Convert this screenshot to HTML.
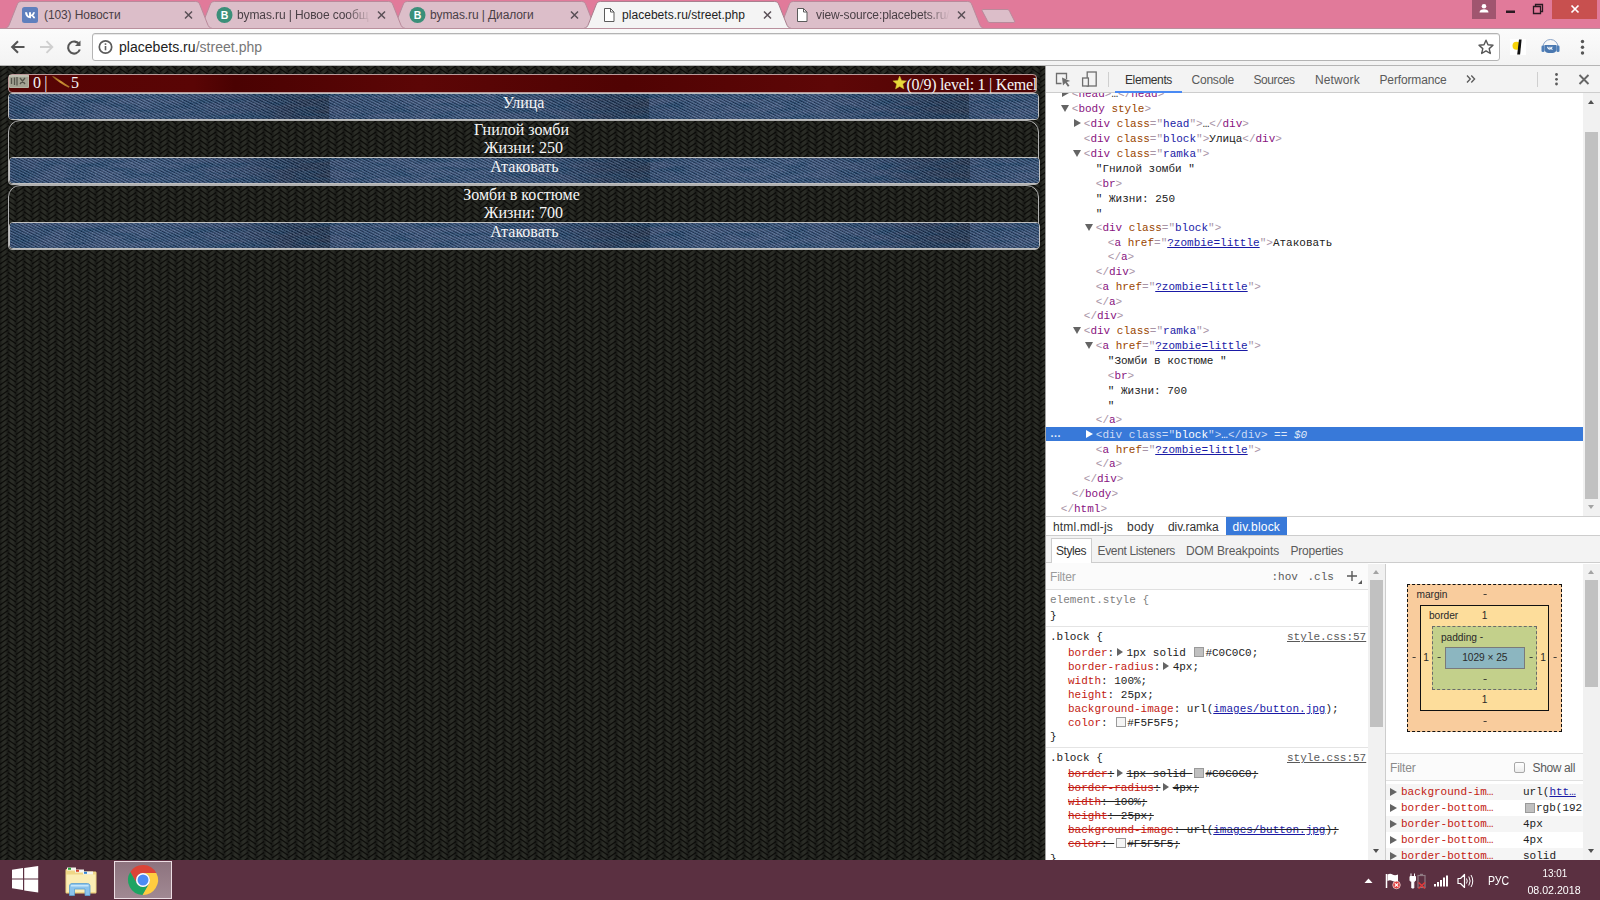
<!DOCTYPE html>
<html>
<head>
<meta charset="utf-8">
<title>placebets.ru/street.php</title>
<style>
*{box-sizing:border-box;margin:0;padding:0}
html,body{width:1600px;height:900px;overflow:hidden;background:#E17A9A;font-family:"Liberation Sans",sans-serif}
.abs{position:absolute}
#frame{position:absolute;left:0;top:0;width:1600px;height:900px;background:#E17A9A;overflow:hidden}
/* ---------- tab strip ---------- */
#tabs{position:absolute;left:0;top:0;width:1600px;height:28px}
#tabs svg{position:absolute;left:0;top:0}
.tabtxt{position:absolute;top:7px;font-size:12px;line-height:16px;color:#4a4046;white-space:nowrap;overflow:hidden;letter-spacing:-0.1px}
.tabtxt.act{color:#222;letter-spacing:0.04px}
.tabx{position:absolute;top:10px;width:9px;height:9px}
/* ---------- toolbar ---------- */
#toolbar{position:absolute;left:0;top:28px;width:1600px;height:38px;background:linear-gradient(#fbfbfb,#f3f3f3);border-top:1px solid #b9909d;border-bottom:1px solid #b5b5b5}
#omni{position:absolute;left:92px;top:4.3px;width:1408px;height:27.4px;background:#fff;border:1px solid #b4b4b4;border-radius:3px;box-shadow:inset 0 1px 0 #e8e8e8}
#url{position:absolute;left:119px;top:10.3px;font-size:14px;line-height:16px;color:#222;white-space:nowrap;letter-spacing:0.03px}
#url span{color:#777}
/* ---------- page ---------- */
#page{position:absolute;left:0;top:66px;width:1045px;height:794px;overflow:hidden;background-color:#1d1e1b}
#page .knit{position:absolute;left:0;top:0;width:100%;height:100%}
.serif{font-family:"Liberation Serif",serif;font-size:16px;line-height:18px;color:#F5F5F5;text-align:center;white-space:nowrap}
.block{position:absolute;left:8px;width:1031px;height:27px;border:1px solid #C0C0C0;border-radius:4px;overflow:hidden}
.denim{position:absolute;left:0;top:0;width:100%;height:100%}
.ramka{position:absolute;left:8px;width:1031px;border:1px solid #b0b0b0;border-radius:12px 12px 4px 4px}
#head{position:absolute;left:8px;top:8px;width:1029px;height:19px;border:1px solid #b99;border-radius:4px;background:linear-gradient(90deg,#560404 0%,#5a0505 18%,#4a0202 22%,#5c0606 40%,#500303 60%,#5e0707 80%,#4c0303 100%)}
/* ---------- devtools ---------- */
#dt{position:absolute;left:1045px;top:66px;width:555px;height:794px;background:#fff;border-left:1px solid #a3a3a3;overflow:hidden;font-size:12px;color:#333}
.mono{font-family:"Liberation Mono",monospace;font-size:11px;line-height:14.7px;white-space:pre}

/* devtools detail */
#dt .tb{position:absolute;left:0;top:0;width:554px;height:27px;background:#f3f3f3;border-bottom:1px solid #cdcdcd}
#dt .tbt{position:absolute;top:6.8px;font-size:12px;line-height:15px;color:#5a5a5a;white-space:nowrap}
#dt .tbt.sel{color:#333}
.row{position:absolute;left:0;height:15px;white-space:pre;font-family:"Liberation Mono",monospace;font-size:11px;line-height:15px;color:#222}
.row i{font-style:normal}
.b{color:#a894a6}.t{color:#881280}.n{color:#994500}.v{color:#1a1aa6}.lk{color:#1a1aa6;text-decoration:underline}
.tri{position:absolute;width:0;height:0}
.tri.d{border-left:4px solid transparent;border-right:4px solid transparent;border-top:7px solid #646464}
.tri.r{border-top:4px solid transparent;border-bottom:4px solid transparent;border-left:7px solid #646464}
.selrow{position:absolute;left:0px;top:361px;width:537px;height:15px;background:#3879d9}
.sel .b,.sel .t,.sel .n{color:#cfdcf5}.sel .v{color:#fff}

.ui{position:absolute;font-size:12px;line-height:15px;color:#5a5a5a;white-space:nowrap}
.st{position:absolute;font-family:"Liberation Mono",monospace;font-size:11px;line-height:14px;white-space:pre;color:#222}
.st i{font-style:normal}
.p{color:#c21a12}.g{color:#808080}
.sw{display:inline-block;width:10px;height:10px;border:1px solid #9a9a9a;vertical-align:-1.5px;margin:0 1px 0 2px}
.so{text-decoration:line-through}
.mt{display:inline-block;width:0;height:0;border-top:4px solid transparent;border-bottom:4px solid transparent;border-left:6.5px solid #646464;vertical-align:-0.5px;margin:0 3.5px 0 2.7px}
.bm{position:absolute;font-size:10.2px;line-height:12px;color:#2a2a2a;white-space:nowrap;letter-spacing:-0.05px;margin-top:-0.5px}
.sbar{position:absolute;background:#f1f1f1}
.sthumb{position:absolute;background:#c1c1c1}
.arr{position:absolute;width:0;height:0;border-left:3.7px solid transparent;border-right:3.7px solid transparent;margin-left:.3px}
.arr.u{border-bottom:4.5px solid #505050}.arr.dn{border-top:4.5px solid #505050}
/* ---------- taskbar ---------- */
#task{position:absolute;left:0;top:860px;width:1600px;height:40px;background:#5B3041}
</style>
</head>
<body>
<div id="frame">

<!-- TABSTRIP -->
<div id="tabs">
<svg width="1600" height="29" viewBox="0 0 1600 29">
<path d="M776.5 28.5 C779.5 28 780.5 26.5 781.5 24 L789 5 C790 2.5 791 1.5 793.5 1.5 L967.5 1.5 C970 1.5 971 2.5 972 5 L979.5 24 C980.5 26.5 981.5 28 984.5 28.5 Z" fill="#DCBEC9" stroke="#b98a9b" stroke-width="1"/>
<path d="M390.5 28.5 C393.5 28 394.5 26.5 395.5 24 L403 5 C404 2.5 405 1.5 407.5 1.5 L581.5 1.5 C584 1.5 585 2.5 586 5 L593.5 24 C594.5 26.5 595.5 28 598.5 28.5 Z" fill="#DCBEC9" stroke="#b98a9b" stroke-width="1"/>
<path d="M197.5 28.5 C200.5 28 201.5 26.5 202.5 24 L210 5 C211 2.5 212 1.5 214.5 1.5 L388.5 1.5 C391 1.5 392 2.5 393 5 L400.5 24 C401.5 26.5 402.5 28 405.5 28.5 Z" fill="#DCBEC9" stroke="#b98a9b" stroke-width="1"/>
<path d="M4.5 28.5 C7.5 28 8.5 26.5 9.5 24 L17 5 C18 2.5 19 1.5 21.5 1.5 L195.5 1.5 C198 1.5 199 2.5 200 5 L207.5 24 C208.5 26.5 209.5 28 212.5 28.5 Z" fill="#DCBEC9" stroke="#b98a9b" stroke-width="1"/>
<path d="M983 9.5 L1007 9.5 C1008.5 9.5 1009 10 1009.7 11.5 L1014.5 21 C1015 22 1014.6 22.5 1013 22.5 L990 22.5 C988.5 22.5 988 22 987.3 20.5 L982.3 11 C981.8 10 982 9.5 983 9.5Z" fill="#DCBEC9" stroke="#b98a9b" stroke-width="1"/>
<rect x="0" y="28" width="1600" height="1" fill="#94687b"/>
<path d="M583.5 28.5 C586.5 28 587.5 26.5 588.5 24 L596 5 C597 2.5 598 1.5 600.5 1.5 L774.5 1.5 C777 1.5 778 2.5 779 5 L786.5 24 C787.5 26.5 788.5 28 791.5 28.5 Z" fill="#F4F4F4" stroke="#a9808f" stroke-width="1"/>
<rect x="586.5" y="28" width="203" height="1" fill="#F4F4F4"/>
<rect x="22" y="7" width="16" height="16" rx="2.5" fill="#5F7FBD"/>
<path transform="translate(30 15.2) scale(1.22 1.3) translate(-29.3 -14.5)" d="M25.2 12.2h1.7c.3 1.6 1 2.8 1.6 3v-3h1.6v1.9c.7-.1 1.4-.9 1.7-1.9h1.6c-.3 1.2-1 2-1.6 2.4.6.3 1.4 1 1.8 2.2h-1.7c-.3-.9-1-1.5-1.8-1.6v1.6h-.4c-2.600 0-4.200-1.800-4.500-4.600z" fill="#fff"/>
<circle cx="224.5" cy="15" r="8" fill="#3B8F79"/>
<text x="224.5" y="18.8" font-family="Liberation Sans" font-weight="bold" font-size="10.5" fill="#fff" text-anchor="middle">B</text>
<circle cx="417.5" cy="15" r="8" fill="#3B8F79"/>
<text x="417.5" y="18.8" font-family="Liberation Sans" font-weight="bold" font-size="10.5" fill="#fff" text-anchor="middle">B</text>
<path d="M604.5 8.500h6l3.500 3.500v9.500h-9.500z" fill="#fff" stroke="#5b5b5b" stroke-width="1"/>
<path d="M610.5 8.500v3.500h3.500" fill="none" stroke="#5b5b5b" stroke-width="1"/>
<path d="M797.5 8.500h6l3.500 3.500v9.500h-9.500z" fill="#fff" stroke="#5b5b5b" stroke-width="1"/>
<path d="M803.5 8.500v3.500h3.500" fill="none" stroke="#5b5b5b" stroke-width="1"/>
<path d="M185.0 11.500l7 7M192.0 11.500l-7 7" stroke="#5a5057" stroke-width="1.5" fill="none"/>
<path d="M378.0 11.500l7 7M385.0 11.500l-7 7" stroke="#5a5057" stroke-width="1.5" fill="none"/>
<path d="M571.0 11.500l7 7M578.0 11.500l-7 7" stroke="#5a5057" stroke-width="1.5" fill="none"/>
<path d="M764.0 11.500l7 7M771.0 11.500l-7 7" stroke="#5a5057" stroke-width="1.5" fill="none"/>
<path d="M958.0 11.500l7 7M965.0 11.500l-7 7" stroke="#5a5057" stroke-width="1.5" fill="none"/>
<rect x="1472" y="0" width="24" height="19" fill="#A0556F"/>
<circle cx="1484" cy="6.300" r="2.300" fill="#fff"/><path d="M1479.500 12.500c0-2.300 2-3.300 4.500-3.300s4.500 1 4.500 3.300z" fill="#fff"/>
<rect x="1506" y="10.500" width="9" height="2.500" fill="#2a1a22"/>
<path d="M1533.500 6.500h7v7h-7z M1535.500 6.500v-2h7v7h-2" fill="none" stroke="#2a1a22" stroke-width="1.300"/>
<rect x="1552" y="0" width="45" height="19" fill="#C8504F"/>
<path d="M1571.500 5.500l7 7M1578.500 5.500l-7 7" stroke="#fff" stroke-width="1.700" fill="none"/>
</svg>
<div class="tabtxt" style="left:44px;width:138px">(103) Новости</div>
<div class="tabtxt" style="left:237px;width:134px;-webkit-mask-image:linear-gradient(90deg,#000 82%,transparent 100%)">bymas.ru | Новое сообщ</div>
<div class="tabtxt" style="left:430px;width:134px">bymas.ru | Диалоги</div>
<div class="tabtxt act" style="left:622px;width:136px">placebets.ru/street.php</div>
<div class="tabtxt" style="left:816px;width:134px;-webkit-mask-image:linear-gradient(90deg,#000 82%,transparent 100%)">view-source:placebets.ru/</div>
</div>

<!-- TOOLBAR -->
<div id="toolbar">
  <div id="omni"></div>
  <svg class="abs" style="left:0;top:-0.9px" width="1600" height="36" viewBox="0 28 1600 36">
    <path d="M24.500 47H12.500M18 41.200L12.200 47l5.800 5.800" fill="none" stroke="#555" stroke-width="2.100"/>
    <path d="M40 47h12M46.500 41.200L52.300 47l-5.800 5.800" fill="none" stroke="#cfcfcf" stroke-width="1.900"/>
    <path d="M79.300 44.500A6 6 0 1 0 79.800 49.500" fill="none" stroke="#555" stroke-width="2.100"/>
    <path d="M80.500 40.500v5.500h-5.500z" fill="#595959"/>
    <circle cx="105.500" cy="47" r="6.200" fill="none" stroke="#5a5a5a" stroke-width="1.700"/>
    <rect x="104.700" y="46" width="1.600" height="4.300" fill="#5f5f5f"/><rect x="104.700" y="43.300" width="1.600" height="1.600" fill="#5f5f5f"/>
    <path d="M1486 40.200l2 4.600 5 .5-3.800 3.300 1.100 4.900-4.300-2.600-4.300 2.600 1.100-4.900-3.800-3.300 5-.5z" fill="none" stroke="#555" stroke-width="1.400" stroke-linejoin="round"/>
    <rect x="1510" y="39" width="16" height="16" fill="#fff"/>
    <circle cx="1516.500" cy="45.800" r="4" fill="#F7D308"/>
    <path d="M1519 39.500h2.600l-1.500 15h-2.900z" fill="#111"/>
    <path d="M1543 47a7.500 7.500 0 0 1 15 0" fill="none" stroke="#8aa4c8" stroke-width="1"/>
    <rect x="1541.500" y="45.500" width="3" height="6.500" rx="1.300" fill="#4f7fb8"/><rect x="1556.500" y="45.500" width="3" height="6.500" rx="1.300" fill="#4f7fb8"/>
    <path d="M1544.500 45h12v4.500c0 2-2 3.500-4 3.500h-4c-2 0-4-1.500-4-3.500z" fill="#4a78b0"/>
    <path d="M1547 46.800h1.300c.2 1 .7 1.800 1.100 1.900v-1.900h1.100v1.200c.5-.1.900-.6 1.100-1.200h1.100c-.2.800-.7 1.300-1.100 1.500.4.200 1 .7 1.200 1.500h-1.200c-.2-.6-.6-1-1.100-1v1h-.3c-1.700 0-2.900-1.200-3.200-3z" fill="#fff"/>
    <circle cx="1582.500" cy="41.500" r="1.700" fill="#555"/><circle cx="1582.500" cy="47.300" r="1.700" fill="#555"/><circle cx="1582.500" cy="53" r="1.700" fill="#555"/>
  </svg>
  <div id="url">placebets.ru<span>/street.php</span></div>
</div>

<!-- PAGE -->
<div id="page">
  <svg class="knit" width="1045" height="794">
    <defs>
      <linearGradient id="kc" x1="0" x2="1" y1="0" y2="0">
        <stop offset="0" stop-color="#000" stop-opacity=".42"/>
        <stop offset=".35" stop-color="#000" stop-opacity=".0"/>
        <stop offset=".65" stop-color="#000" stop-opacity=".0"/>
        <stop offset="1" stop-color="#000" stop-opacity=".42"/>
      </linearGradient>
      <pattern id="kn" width="16" height="11" patternUnits="userSpaceOnUse">
        <rect width="16" height="11" fill="#2a2c26"/>
        <path d="M0 5.5L8 0M0 11L8 5.5M0 16.5L8 11M0 0L8 -5.5" stroke="#0d0d0a" stroke-width="1.35" fill="none"/>
        <path d="M8 2.75L16 8.25M8 8.25L16 13.75M8 -2.75L16 2.75M8 -8.25L16 -2.75" stroke="#0d0d0a" stroke-width="1.35" fill="none"/>
        <rect x="0" width="8" height="11" fill="url(#kc)"/>
        <rect x="8" width="8" height="11" fill="url(#kc)"/>
      </pattern>
      <pattern id="tw" width="8" height="2.45" patternUnits="userSpaceOnUse" patternTransform="rotate(27)">
        <rect width="8" height="1.3" fill="#c4d6f0" opacity=".26"/>
        <rect y="1.3" width="8" height="1.15" fill="#020818" opacity=".44"/>
      </pattern>
      <filter id="nz" x="0" y="0" width="100%" height="100%">
        <feTurbulence type="fractalNoise" baseFrequency=".55 .45" numOctaves="2" seed="7" result="t"/>
        <feColorMatrix type="matrix" values="0 0 0 0 .58  0 0 0 0 .68  0 0 0 0 .82  1.7 0 0 0 -.6"/>
      </filter>
      <filter id="nz2" x="0" y="0" width="100%" height="100%">
        <feTurbulence type="fractalNoise" baseFrequency=".035 .2" numOctaves="2" seed="3"/>
        <feColorMatrix type="matrix" values="0 0 0 0 0  0 0 0 0 .03  0 0 0 0 .1  0 1.5 0 0 -.55"/>
      </filter>
      <linearGradient id="dg" x1="0" x2="1" y1="0" y2="0">
        <stop offset="0" stop-color="#30466f"/>
        <stop offset=".15" stop-color="#354d77"/>
        <stop offset=".45" stop-color="#37517c"/>
        <stop offset=".72" stop-color="#2d436b"/>
        <stop offset=".88" stop-color="#1b2c4b"/>
        <stop offset="1" stop-color="#172640"/>
      </linearGradient>
      <pattern id="dn" width="320" height="27" patternUnits="userSpaceOnUse">
        <rect width="320" height="27" fill="url(#dg)"/>
      </pattern>
    </defs>
    <rect width="1045" height="794" fill="url(#kn)" style="filter:blur(.45px)"/>
  </svg>
  <div id="head"></div>
  <svg class="abs" style="left:0;top:0" width="1045" height="30" viewBox="0 66 1045 30">
    <defs><linearGradient id="bul" x1="0" y1="0" x2="1" y2="1"><stop offset="0" stop-color="#8a5a1c"/><stop offset=".5" stop-color="#d9a13a"/><stop offset="1" stop-color="#b07826"/></linearGradient></defs>
    <rect x="9" y="75" width="20" height="13" rx="1" fill="#b4b4a4"/>
    <rect x="10" y="76" width="18" height="11" fill="#a3a394"/>
    <path d="M11.500 78v6M14.500 77.500v7.500M17 77v8.500M20 78l5 6M25 78l-5 6" stroke="#55554c" stroke-width="1.300" fill="none"/>
    <rect x="9" y="75" width="20" height="2" fill="#c8c8ba" opacity=".7"/>
    <path d="M51.800 76.200L53.800 76.200c5 3.200 10.500 6.800 15.800 10.300l-.9 1.200c-6.500-3.200-12-6.900-16.900-11.500z" fill="url(#bul)" opacity=".92"/>
    <path d="M899.700 76l1.900 4.500 4.900.4-3.700 3.200 1.100 4.800-4.200-2.500-4.200 2.500 1.100-4.800-3.700-3.200 4.900-.4z" fill="#E8D83A" stroke="#c9b62a" stroke-width=".5"/>
  </svg>
  <div class="serif abs" style="left:33px;top:8px;text-align:left;letter-spacing:-0.4px">0 |</div>
  <div class="serif abs" style="left:71px;top:8px;text-align:left">5</div>
  <div class="serif abs" style="right:8px;top:10px;text-align:right;letter-spacing:-0.27px">(0/9) level: 1 | Kemel</div>
  <div class="block" style="top:27px"><svg class="denim" width="1029" height="25"><rect width="1029" height="25" fill="url(#dn)"/><rect width="1029" height="25" filter="url(#nz2)"/><rect width="1029" height="25" fill="url(#tw)"/><rect width="1029" height="25" filter="url(#nz)" opacity=".22"/></svg><div class="serif abs" style="left:0;top:0;width:1029px">Улица</div></div>
<div class="ramka" style="top:54px;height:65px"></div>
<div class="serif abs" style="left:9px;top:55px;width:1029px;line-height:18px"><span style="position:relative;left:-2px">Гнилой зомби</span><br>Жизни: 250</div>
<div class="block" style="left:9px;top:91px"><svg class="denim" width="1029" height="25"><rect width="1029" height="25" fill="url(#dn)"/><rect width="1029" height="25" filter="url(#nz2)"/><rect width="1029" height="25" fill="url(#tw)"/><rect width="1029" height="25" filter="url(#nz)" opacity=".22"/></svg><div class="serif abs" style="left:0;top:0;width:1029px">Атаковать</div></div>
<div class="ramka" style="top:119px;height:65px"></div>
<div class="serif abs" style="left:9px;top:120px;width:1029px;line-height:18px"><span style="position:relative;left:-2px">Зомби в костюме</span><br>Жизни: 700</div>
<div class="block" style="left:9px;top:156px"><svg class="denim" width="1029" height="25"><rect width="1029" height="25" fill="url(#dn)"/><rect width="1029" height="25" filter="url(#nz2)"/><rect width="1029" height="25" fill="url(#tw)"/><rect width="1029" height="25" filter="url(#nz)" opacity=".22"/></svg><div class="serif abs" style="left:0;top:0;width:1029px">Атаковать</div></div>

</div>

<!-- DEVTOOLS -->
<div id="dt">
<div class="abs" id="tree" style="left:0;top:27px;width:554px;height:423px;overflow:hidden">
<div class="selrow" style="top:334px;height:14px"></div>
<div class="row" style="left:25.8px;top:-5.8px"><i class="b">&lt;</i><i class="t">head</i><i class="b">&gt;</i>…<i class="b">&lt;/</i><i class="t">head</i><i class="b">&gt;</i></div>
<div class="tri r" style="left:15.7px;top:-3.9px"></div>
<div class="row" style="left:25.8px;top:8.9px"><i class="b">&lt;</i><i class="t">body</i> <i class="n">style</i><i class="b">&gt;</i></div>
<div class="tri d" style="left:14.7px;top:11.8px"></div>
<div class="row" style="left:37.8px;top:24.2px"><i class="b">&lt;</i><i class="t">div</i> <i class="n">class</i><i class="b">="</i><i class="v">head</i><i class="b">"</i><i class="b">&gt;</i>…<i class="b">&lt;/</i><i class="t">div</i><i class="b">&gt;</i></div>
<div class="tri r" style="left:27.7px;top:26.1px"></div>
<div class="row" style="left:37.8px;top:39.0px"><i class="b">&lt;</i><i class="t">div</i> <i class="n">class</i><i class="b">="</i><i class="v">block</i><i class="b">"</i><i class="b">&gt;</i>Улица<i class="b">&lt;/</i><i class="t">div</i><i class="b">&gt;</i></div>
<div class="row" style="left:37.8px;top:54.0px"><i class="b">&lt;</i><i class="t">div</i> <i class="n">class</i><i class="b">="</i><i class="v">ramka</i><i class="b">"</i><i class="b">&gt;</i></div>
<div class="tri d" style="left:26.7px;top:56.9px"></div>
<div class="row" style="left:49.8px;top:69.1px">"Гнилой зомби "</div>
<div class="row" style="left:49.8px;top:84.1px"><i class="b">&lt;</i><i class="t">br</i><i class="b">&gt;</i></div>
<div class="row" style="left:49.8px;top:99.2px">" Жизни: 250</div>
<div class="row" style="left:49.8px;top:113.7px">"</div>
<div class="row" style="left:49.8px;top:128.2px"><i class="b">&lt;</i><i class="t">div</i> <i class="n">class</i><i class="b">="</i><i class="v">block</i><i class="b">"</i><i class="b">&gt;</i></div>
<div class="tri d" style="left:38.7px;top:131.1px"></div>
<div class="row" style="left:61.8px;top:143.2px"><i class="b">&lt;</i><i class="t">a</i> <i class="n">href</i><i class="b">="</i><i class="lk">?zombie=little</i><i class="b">"</i><i class="b">&gt;</i>Атаковать</div>
<div class="row" style="left:61.8px;top:157.2px"><i class="b">&lt;/</i><i class="t">a</i><i class="b">&gt;</i></div>
<div class="row" style="left:49.8px;top:172.3px"><i class="b">&lt;/</i><i class="t">div</i><i class="b">&gt;</i></div>
<div class="row" style="left:49.8px;top:187.3px"><i class="b">&lt;</i><i class="t">a</i> <i class="n">href</i><i class="b">="</i><i class="lk">?zombie=little</i><i class="b">"</i><i class="b">&gt;</i></div>
<div class="row" style="left:49.8px;top:202.0px"><i class="b">&lt;/</i><i class="t">a</i><i class="b">&gt;</i></div>
<div class="row" style="left:37.8px;top:215.9px"><i class="b">&lt;/</i><i class="t">div</i><i class="b">&gt;</i></div>
<div class="row" style="left:37.8px;top:231.0px"><i class="b">&lt;</i><i class="t">div</i> <i class="n">class</i><i class="b">="</i><i class="v">ramka</i><i class="b">"</i><i class="b">&gt;</i></div>
<div class="tri d" style="left:26.7px;top:233.9px"></div>
<div class="row" style="left:49.8px;top:246.0px"><i class="b">&lt;</i><i class="t">a</i> <i class="n">href</i><i class="b">="</i><i class="lk">?zombie=little</i><i class="b">"</i><i class="b">&gt;</i></div>
<div class="tri d" style="left:38.7px;top:248.9px"></div>
<div class="row" style="left:61.8px;top:261.1px">"Зомби в костюме "</div>
<div class="row" style="left:61.8px;top:276.1px"><i class="b">&lt;</i><i class="t">br</i><i class="b">&gt;</i></div>
<div class="row" style="left:61.8px;top:291.2px">" Жизни: 700</div>
<div class="row" style="left:61.8px;top:305.7px">"</div>
<div class="row" style="left:49.8px;top:320.2px"><i class="b">&lt;/</i><i class="t">a</i><i class="b">&gt;</i></div>
<div class="row sel" style="left:49.8px;top:334.9px"><i class="b">&lt;</i><i class="t">div</i> <i class="n">class</i><i class="b">="</i><i class="v">block</i><i class="b">"</i><i class="b">&gt;</i><i style="color:#fff">…</i><i class="b">&lt;/</i><i class="t">div</i><i class="b">&gt;</i><i style="color:#dfe8f8"> == <i style="font-style:italic">$0</i></i></div>
<div class="tri r" style="left:39.7px;top:336.8px;border-left-color:#fff"></div>
<div class="row" style="left:49.8px;top:350.3px"><i class="b">&lt;</i><i class="t">a</i> <i class="n">href</i><i class="b">="</i><i class="lk">?zombie=little</i><i class="b">"</i><i class="b">&gt;</i></div>
<div class="row" style="left:49.8px;top:364.0px"><i class="b">&lt;/</i><i class="t">a</i><i class="b">&gt;</i></div>
<div class="row" style="left:37.8px;top:379.0px"><i class="b">&lt;/</i><i class="t">div</i><i class="b">&gt;</i></div>
<div class="row" style="left:25.8px;top:394.1px"><i class="b">&lt;/</i><i class="t">body</i><i class="b">&gt;</i></div>
<div class="row" style="left:14.8px;top:409.1px"><i class="b">&lt;/</i><i class="t">html</i><i class="b">&gt;</i></div>
<div class="abs" style="left:4px;top:332.7px;font-size:11px;line-height:15px;color:#dfe8f8;letter-spacing:0.5px;font-weight:bold">…</div>
</div>
<div class="tb">
<svg class="abs" style="left:0;top:0" width="554" height="27" viewBox="1046 66 554 27">
  <path d="M1066.500 79v-5.500h-10v10h5" fill="none" stroke="#6e6e6e" stroke-width="1.300"/>
  <path d="M1062 77.500l8.200 3.400-3.400 1.200 2.700 3.600-1.600 1.100-2.600-3.700-2.300 2.500z" fill="#6e6e6e"/>
  <rect x="1087.200" y="72" width="9" height="14" fill="none" stroke="#6e6e6e" stroke-width="1.300"/>
  <rect x="1082.600" y="78" width="5.800" height="8" fill="#f3f3f3" stroke="#6e6e6e" stroke-width="1.300"/>
  <rect x="1108" y="72" width="1" height="15" fill="#cfcfcf"/>
  <rect x="1115" y="91" width="67" height="2" fill="#4a8af4"/>
  <path d="M1467 75.500l3.300 3.500-3.300 3.500M1471.300 75.500l3.300 3.500-3.300 3.500" fill="none" stroke="#5a5a5a" stroke-width="1.300"/>
  <rect x="1537" y="72" width="1" height="15" fill="#cfcfcf"/>
  <circle cx="1556.500" cy="74.500" r="1.400" fill="#5a5a5a"/><circle cx="1556.500" cy="79.300" r="1.400" fill="#5a5a5a"/><circle cx="1556.500" cy="84" r="1.400" fill="#5a5a5a"/>
  <path d="M1579.500 75l9 9M1588.500 75l-9 9" stroke="#666" stroke-width="1.900" fill="none"/>
</svg>
<div class="tbt sel" style="left:79px;letter-spacing:-0.38px">Elements</div>
<div class="tbt" style="left:145.5px;letter-spacing:-0.22px">Console</div>
<div class="tbt" style="left:207.5px;letter-spacing:-0.43px">Sources</div>
<div class="tbt" style="left:269px;letter-spacing:0.11px">Network</div>
<div class="tbt" style="left:333.5px;letter-spacing:-0.14px">Performance</div>
</div>
<div class="sbar" style="left:537px;top:27px;width:17px;height:424px"></div>
<div class="sthumb" style="left:539px;top:66px;width:13px;height:367px"></div>
<div class="arr u" style="left:541.5px;top:34px"></div><div class="arr dn" style="left:541.5px;top:439px;border-top-color:#a3a3a3"></div>
<div class="abs" style="left:0;top:450px;width:554px;height:20px;background:#fff;border-top:1px solid #cfcfcf"></div>
<div class="abs" style="left:180px;top:451px;width:61px;height:18px;background:#3879d9"></div>
<div class="ui" style="left:7px;top:454px;color:#333;letter-spacing:0.18px">html.mdl-js</div>
<div class="ui" style="left:81px;top:454px;color:#333;letter-spacing:0.24px">body</div>
<div class="ui" style="left:122px;top:454px;color:#333;letter-spacing:-0.07px">div.ramka</div>
<div class="ui" style="left:186.5px;top:454px;color:#fff;letter-spacing:0.19px">div.block</div>
<div class="abs" style="left:0;top:469px;width:554px;height:28px;background:#f3f3f3;border-top:1px solid #cdcdcd;border-bottom:1px solid #cdcdcd"></div>
<div class="abs" style="left:5px;top:472px;width:41px;height:25px;background:#fff;border:1px solid #cdcdcd;border-bottom:none"></div>
<div class="ui" style="left:10px;top:477.5px;color:#333;letter-spacing:-0.45px">Styles</div>
<div class="ui" style="left:51.5px;top:477.5px;color:#5a5a5a;letter-spacing:-0.35px">Event Listeners</div>
<div class="ui" style="left:140px;top:477.5px;color:#5a5a5a;letter-spacing:-0.11px">DOM Breakpoints</div>
<div class="ui" style="left:244.5px;top:477.5px;color:#5a5a5a;letter-spacing:-0.22px">Properties</div>
<div class="abs" style="left:0;top:497px;width:322px;height:27px;background:#fbfbfb;border-bottom:1px solid #e0e0e0"></div>
<div class="ui" style="left:4px;top:504px;color:#9a9a9a;letter-spacing:-0.2px">Filter</div>
<div class="st" style="left:225.5px;top:503.8px;color:#5a5a5a">:hov</div>
<div class="st" style="left:261.5px;top:503.8px;color:#5a5a5a">.cls</div>
<svg class="abs" style="left:300px;top:504px" width="18" height="16"><path d="M6 1v10M1 6h10" stroke="#5a5a5a" stroke-width="1.400" fill="none"/><path d="M16 10v4h-4z" fill="#5a5a5a"/></svg>
<div class="st" style="left:4px;top:527.2px"><i class="g">element.style {</i></div>
<div class="st" style="left:4px;top:542.8px">}</div>
<div class="abs" style="left:0;top:560px;width:322px;height:1px;background:#e4e4e4"></div>
<div class="st" style="left:4px;top:564.2px">.block {</div>
<div class="st" style="left:241px;top:564.2px;color:#5a5a5a;text-decoration:underline">style.css:57</div>
<div class="st" style="left:22px;top:579.6px"><i class="p">border</i><i class="">:<i class="mt"></i>1px solid <i class="sw" style="background:#C0C0C0"></i>#C0C0C0;</i></div>
<div class="st" style="left:22px;top:593.6px"><i class="p">border-radius</i><i class="">:<i class="mt"></i>4px;</i></div>
<div class="st" style="left:22px;top:607.7px"><i class="p">width</i><i class="">: 100%;</i></div>
<div class="st" style="left:22px;top:621.7px"><i class="p">height</i><i class="">: 25px;</i></div>
<div class="st" style="left:22px;top:635.8px"><i class="p">background-image</i><i class="">: url(<i class="lk">images/button.jpg</i>);</i></div>
<div class="st" style="left:22px;top:649.8px"><i class="p">color</i><i class="">: <i class="sw" style="background:#F5F5F5"></i>#F5F5F5;</i></div>
<div class="st" style="left:4px;top:664.4px">}</div>
<div class="abs" style="left:0;top:681px;width:322px;height:1px;background:#e4e4e4"></div>
<div class="st" style="left:4px;top:685.3px">.block {</div>
<div class="st" style="left:241px;top:685.3px;color:#5a5a5a;text-decoration:underline">style.css:57</div>
<div class="st" style="left:22px;top:700.7px"><i class="p so">border</i><i class="so">:<i class="mt"></i>1px solid <i class="sw" style="background:#C0C0C0"></i>#C0C0C0;</i></div>
<div class="st" style="left:22px;top:714.7px"><i class="p so">border-radius</i><i class="so">:<i class="mt"></i>4px;</i></div>
<div class="st" style="left:22px;top:728.8px"><i class="p so">width</i><i class="so">: 100%;</i></div>
<div class="st" style="left:22px;top:742.8px"><i class="p so">height</i><i class="so">: 25px;</i></div>
<div class="st" style="left:22px;top:756.9px"><i class="p so">background-image</i><i class="so">: url(<i class="lk">images/button.jpg</i>);</i></div>
<div class="st" style="left:22px;top:770.9px"><i class="p so">color</i><i class="so">: <i class="sw" style="background:#F5F5F5"></i>#F5F5F5;</i></div>
<div class="st" style="left:4px;top:785.5px">}</div>
<div class="sbar" style="left:322px;top:498px;width:17px;height:296px"></div>
<div class="sthumb" style="left:324px;top:514px;width:13px;height:147px"></div>
<div class="arr u" style="left:326.5px;top:504px;border-bottom-color:#a3a3a3"></div><div class="arr dn" style="left:326.5px;top:783px"></div>
<div class="abs" style="left:339px;top:498px;width:1px;height:296px;background:#cdcdcd"></div>
<div class="abs" style="left:361px;top:518px;width:155px;height:148px;background:#F9CC9D;border:1px dashed #111"></div>
<div class="abs" style="left:374px;top:539px;width:129px;height:106px;background:#FDDD9B;border:1px solid #111"></div>
<div class="abs" style="left:386px;top:560px;width:105px;height:64px;background:#C3D08B;border:1px dashed #6a6a6a"></div>
<div class="abs" style="left:399px;top:581px;width:80px;height:22px;background:#8CB6C0;border:1px solid #7a7a7a"></div>
<div class="bm" style="left:370.5px;top:523.7px">margin</div>
<div class="bm" style="left:408.79999999999995px;top:523.7px;width:60px;text-align:center;margin-top:-1.3px;transform:scaleX(1.25)">-</div>
<div class="bm" style="left:383px;top:544.6px">border</div>
<div class="bm" style="left:408.5px;top:544.6px;width:60px;text-align:center">1</div>
<div class="bm" style="left:395px;top:566px">padding <span style="position:relative;top:-.8px">-</span></div>
<div class="bm" style="left:408.79999999999995px;top:586.4px;width:60px;text-align:center">1029 × 25</div>
<div class="bm" style="left:337.70000000000005px;top:586.4px;width:60px;text-align:center;margin-top:-1.3px;transform:scaleX(1.25)">-</div>
<div class="bm" style="left:350px;top:586.4px;width:60px;text-align:center">1</div>
<div class="bm" style="left:362.5999999999999px;top:586.4px;width:60px;text-align:center;margin-top:-1.3px;transform:scaleX(1.25)">-</div>
<div class="bm" style="left:454.5px;top:586.4px;width:60px;text-align:center;margin-top:-1.3px;transform:scaleX(1.25)">-</div>
<div class="bm" style="left:467px;top:586.4px;width:60px;text-align:center">1</div>
<div class="bm" style="left:479px;top:586.4px;width:60px;text-align:center;margin-top:-1.3px;transform:scaleX(1.25)">-</div>
<div class="bm" style="left:408.79999999999995px;top:608px;width:60px;text-align:center;margin-top:-1.3px;transform:scaleX(1.25)">-</div>
<div class="bm" style="left:408.5px;top:628.6px;width:60px;text-align:center">1</div>
<div class="bm" style="left:408.79999999999995px;top:650px;width:60px;text-align:center;margin-top:-1.3px;transform:scaleX(1.25)">-</div>
<div class="abs" style="left:340px;top:687px;width:197px;height:28px;background:#fbfbfb;border-top:1px solid #e0e0e0;border-bottom:1px solid #e0e0e0"></div>
<div class="ui" style="left:344px;top:694.5px;color:#8a8a8a;letter-spacing:-0.2px">Filter</div>
<div class="abs" style="left:468px;top:696px;width:11px;height:11px;border:1px solid #a8a8a8;border-radius:2px;background:linear-gradient(#fff,#ececec)"></div>
<div class="ui" style="left:486.5px;top:694.5px;color:#5a5a5a;letter-spacing:-0.36px">Show all</div>
<div class="abs" style="left:340px;top:717.5px;width:197px;height:16px;background:#f5f5f5"></div>
<div class="abs" style="left:340px;top:749.5px;width:197px;height:16px;background:#f5f5f5"></div>
<div class="abs" style="left:340px;top:781.5px;width:197px;height:16px;background:#f5f5f5"></div>
<div class="tri r" style="left:344.2px;top:721.8px"></div>
<div class="st" style="left:355px;top:719.0px"><i class="p">background-im…</i></div>
<div class="st" style="left:477px;top:719.0px;width:60px;overflow:hidden">url(<i class="lk">htt…</i></div>
<div class="tri r" style="left:344.2px;top:737.8px"></div>
<div class="st" style="left:355px;top:735.0px"><i class="p">border-bottom…</i></div>
<div class="st" style="left:477px;top:735.0px;width:60px;overflow:hidden"><i class="sw" style="background:#C0C0C0"></i>rgb(192</div>
<div class="tri r" style="left:344.2px;top:753.8px"></div>
<div class="st" style="left:355px;top:751.0px"><i class="p">border-bottom…</i></div>
<div class="st" style="left:477px;top:751.0px;width:60px;overflow:hidden">4px</div>
<div class="tri r" style="left:344.2px;top:769.8px"></div>
<div class="st" style="left:355px;top:767.0px"><i class="p">border-bottom…</i></div>
<div class="st" style="left:477px;top:767.0px;width:60px;overflow:hidden">4px</div>
<div class="tri r" style="left:344.2px;top:785.8px"></div>
<div class="st" style="left:355px;top:783.0px"><i class="p">border-bottom…</i></div>
<div class="st" style="left:477px;top:783.0px;width:60px;overflow:hidden">solid</div>
<div class="sbar" style="left:537px;top:498px;width:17px;height:296px"></div>
<div class="sthumb" style="left:539px;top:514px;width:13px;height:107px"></div>
<div class="arr u" style="left:541.5px;top:504px;border-bottom-color:#a3a3a3"></div><div class="arr dn" style="left:541.5px;top:783px"></div>
<!--LOWER2-->
</div>

<!-- TASKBAR -->
<div id="task">
<svg class="abs" style="left:0;top:0" width="1600" height="40" viewBox="0 860 1600 40">
  <!-- windows logo -->
  <path d="M12 869.700l11-1.600v10.300h-11z M24.200 867.900l14-2v12.500h-14z M12 879.600h11v10.300l-11-1.600z M24.200 879.600h14v12.900l-14-2z" fill="#fff"/>
  <!-- explorer -->
  <path d="M65.500 870.500c0-1 .5-1.500 1.500-1.500h8l2 2.500h18c1 0 1.500.5 1.500 1.500v19c0 1-.5 1.500-1.500 1.500h-28c-1 0-1.500-.5-1.500-1.500z" fill="#EFD686"/>
  <path d="M66.500 874.500h29v17.500h-29z" fill="#FBEDB5"/>
  <path d="M67 867.500h9v3h-9z" fill="#f6f6f0"/><rect x="68" y="867.800" width="3" height="2" fill="#2aa43a"/>
  <path d="M75 869.500h9v3h-9z" fill="#f6f6f0"/><rect x="76" y="869.800" width="3" height="2" fill="#d1402a"/>
  <path d="M83 871.500h10v3h-10z" fill="#f6f6f0"/><rect x="84" y="871.800" width="3" height="2" fill="#2f84d6"/>
  <path d="M69.500 895.500v-9.500c0-1.500 1-2.500 2.500-2.500h15.500c1.500 0 2.500 1 2.500 2.500v9.500h-5v-6.500h-10.500v6.500z" fill="#8CC4EC" stroke="#5aa0d0" stroke-width=".8"/>
  <path d="M71 885h17.500v1.500h-17.500z" fill="#c7e6fa"/>
  <!-- chrome button -->
  <defs><linearGradient id="cb" x1="0" x2="0" y1="0" y2="1"><stop offset="0" stop-color="#8d737e"/><stop offset="1" stop-color="#a18993"/></linearGradient></defs><rect x="114.500" y="861.500" width="57" height="37" fill="url(#cb)" stroke="#ecdde3" stroke-width="1"/>
  <g transform="translate(143 880)">
    <path d="M0-7L13.270-7A15 15 0 0 0-12.700-7.990L-6.062 3.500A7 7 0 0 1 0-7Z" fill="#DB4437"/>
    <path d="M6.062 3.500L-.573 14.990A15 15 0 0 0 13.270-7L0-7A7 7 0 0 1 6.062 3.500Z" fill="#FFCD40"/>
    <path d="M-6.062 3.500L-12.700-7.990A15 15 0 0 0-.573 14.990L6.062 3.500A7 7 0 0 1-6.062 3.500Z" fill="#1DA462"/>
    <circle r="7" fill="#fff"/><circle r="5.500" fill="#4C8BF5"/>
  </g>
  <!-- tray -->
  <path d="M1364.500 883l4-4.500 4 4.500z" fill="#fff"/>
  <path d="M1386.500 874v14" stroke="#fff" stroke-width="1.500"/>
  <path d="M1387.500 874.500c2-1 3.500-1 5 0s3.500 1 5.500 0v6.500c-2 1-3.500 1-5.500 0s-3-1-5 0z" fill="#fff"/>
  <circle cx="1396.500" cy="885" r="3.800" fill="#e03a3a" stroke="#fff" stroke-width=".6"/>
  <path d="M1394.800 883.300l3.400 3.400M1398.200 883.300l-3.400 3.400" stroke="#fff" stroke-width="1.200"/>
  <path d="M1411 873.500v3M1414.500 873.500v3M1410 876.500h5.500v3.500c0 1-1 1.500-1.700 1.500v6.500h-2v-6.500c-1 0-1.800-.5-1.800-1.500z" fill="#fff" stroke="#fff" stroke-width="1"/>
  <rect x="1418" y="875.500" width="7" height="12" fill="#5C3042" stroke="#8f7a82" stroke-width="1.200"/><rect x="1420" y="873.800" width="3" height="1.700" fill="#8f7a82"/>
  <path d="M1418.500 882.500l6.500 6M1425 882.500l-6.500 6" stroke="#e03a3a" stroke-width="1.600"/>
  <rect x="1434" y="884" width="2" height="2.500" fill="#fff"/><rect x="1437" y="882" width="2" height="4.500" fill="#fff"/><rect x="1440" y="880" width="2" height="6.500" fill="#fff"/><rect x="1443" y="877.500" width="2" height="9" fill="#fff"/><rect x="1446" y="875.500" width="2" height="11" fill="#fff"/>
  <path d="M1458 878.500h2.500l4-4v13l-4-4h-2.500z" fill="none" stroke="#fff" stroke-width="1.200" stroke-linejoin="round"/>
  <path d="M1466.500 878.500q1.500 2.500 0 5M1468.800 876.500q2.700 4.500 0 9M1471 875q3.500 6 0 12" fill="none" stroke="#fff" stroke-width="1"/>
</svg>
<div class="abs" style="left:1488px;top:12.500px;font-size:12px;line-height:16px;color:#fff;transform:scaleX(.88);transform-origin:0 0">РУС</div>
<div class="abs" style="left:1524.500px;top:4.500px;width:60px;text-align:center;font-size:11.5px;line-height:16px;color:#fff;transform:scaleX(.86)">13:01</div>
<div class="abs" style="left:1519px;top:21.500px;width:70px;text-align:center;font-size:11.5px;line-height:16px;color:#fff;transform:scaleX(.925)">08.02.2018</div>
</div>

</div>
</body>
</html>
